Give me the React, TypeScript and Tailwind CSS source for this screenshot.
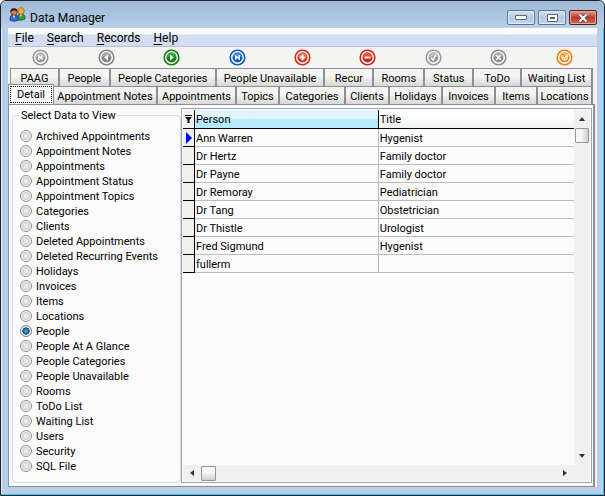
import { useState, type ReactNode } from "react";

const views = [
  "Archived Appointments",
  "Appointment Notes",
  "Appointments",
  "Appointment Status",
  "Appointment Topics",
  "Categories",
  "Clients",
  "Deleted Appointments",
  "Deleted Recurring Events",
  "Holidays",
  "Invoices",
  "Items",
  "Locations",
  "People",
  "People At A Glance",
  "People Categories",
  "People Unavailable",
  "Rooms",
  "ToDo List",
  "Waiting List",
  "Users",
  "Security",
  "SQL File",
];

const people = [
  ["Ann Warren", "Hygenist"],
  ["Dr Hertz", "Family doctor"],
  ["Dr Payne", "Family doctor"],
  ["Dr Remoray", "Pediatrician"],
  ["Dr Tang", "Obstetrician"],
  ["Dr Thistle", "Urologist"],
  ["Fred Sigmund", "Hygenist"],
  ["fullerm", ""],
];

const backTabs = [
  "PAAG",
  "People",
  "People Categories",
  "People Unavailable",
  "Recur",
  "Rooms",
  "Status",
  "ToDo",
  "Waiting List",
];

const frontTabs = [
  "Appointment Notes",
  "Appointments",
  "Topics",
  "Categories",
  "Clients",
  "Holidays",
  "Invoices",
  "Items",
  "Locations",
];

const menus = ["File", "Search", "Records", "Help"];

function PeopleLogo() {
  return (
    <svg width="17" height="15" viewBox="0 0 17 15" aria-hidden="true">
      <path d="M8.5 13V9.5Q8.5 7 12 7T16 9.5V12Q13 14 8.5 13Z" fill="#3f9a35" stroke="#1d4d1c" strokeWidth=".7" />
      <path d="M11 7h2l-1 3z" fill="#fff" />
      <circle cx="12" cy="4" r="3.2" fill="#f6b04a" stroke="#8c5310" strokeWidth=".8" />
      <path d="M9 3.5Q9.3 .8 12 .8T15.2 3.5Q12 1.8 9 3.5Z" fill="#e09a1c" />
      <path d="M1 13.5V10.5Q1 8 5 8T9 10.5V13.5Q5 15 1 13.5Z" fill="#3468d8" stroke="#16306f" strokeWidth=".7" />
      <path d="M4 8h2l-1 4z" fill="#fff" />
      <circle cx="5" cy="5" r="3.2" fill="#d98250" stroke="#5a2b14" strokeWidth=".8" />
      <path d="M1.5 5Q1.3 1.3 5 1.3T8.5 5Q6.5 3 4.5 3.8T1.5 5Z" fill="#3a2018" />
    </svg>
  );
}

function Orb({ color, light, children }: { color: string; light: string; children: ReactNode }) {
  return (
    <svg width="17" height="17" viewBox="0 0 17 17" aria-hidden="true">
      <circle cx="8.5" cy="8.5" r="7.3" fill="#fff" stroke={color} strokeWidth="1.6" />
      <circle cx="8.5" cy="8.5" r="5" fill={color} />
      <path d="M3.8 8Q4.3 3.7 8.5 3.5T13.2 8Q8.5 6.5 3.8 8Z" fill={light} />
      {children}
    </svg>
  );
}

const tools = [
  { name: "First", color: "#989898", light: "#b8b8b8", art: <path d="M6 6h1.5v2L10.5 6v5L7.5 9v2H6z" fill="#fff" /> },
  { name: "Previous", color: "#858585", light: "#a5a5a5", art: <path d="M10 5.5v6L6 8.5z" fill="#fff" /> },
  { name: "Next", color: "#0b7d14", light: "#3ca53f", art: <path d="M7 5.5v6l4-3z" fill="#fff" /> },
  { name: "Last", color: "#1158bd", light: "#3c8ae0", art: <path d="M6 6L9.5 8V6H11v5H9.5V9L6 11z" fill="#fff" /> },
  { name: "Insert", color: "#cf2a1c", light: "#ee6250", art: <path d="M7.5 5.5h2v2h2v2h-2v2h-2v-2h-2v-2h2z" fill="#fff" /> },
  { name: "Delete", color: "#c9261a", light: "#e65544", art: <path d="M5.5 7.5h6v2h-6z" fill="#fff" /> },
  { name: "Post", color: "#9a9a9a", light: "#bbbbbb", art: <path d="M6 8.5l2 2.5 3-5.5" fill="none" stroke="#fff" strokeWidth="1.5" /> },
  { name: "Cancel", color: "#8e8e8e", light: "#adadad", art: <path d="M6.3 6.3l4.4 4.4M10.7 6.3l-4.4 4.4" stroke="#fff" strokeWidth="1.5" /> },
  { name: "Refresh", color: "#ec7f14", light: "#f7aa4b", art: <path d="M6 7Q5.3 11 8.5 11T11.3 7M7 8l1.5 1.5L11.5 5.5" fill="none" stroke="#fff" strokeWidth="1.2" /> },
];

function Arrow({ d }: { d: string }) {
  return (
    <svg width="8" height="8" viewBox="0 0 8 8" aria-hidden="true">
      <path d={d} fill="#333" />
    </svg>
  );
}

function Tab({ label }: { label: string }) {
  return (
    <button
      role="tab"
      aria-selected="false"
      className="h-full min-w-0 overflow-hidden whitespace-nowrap border-r-2 border-t border-r-[#8c8f98] border-t-[#8c8f98] bg-linear-to-b from-[#f4f4f3] from-45% to-[#d6d8d5] pt-0.5 text-center"
    >
      {label}
    </button>
  );
}

const captionButton =
  "flex h-[15px] items-center justify-center rounded-[2px] border border-[#62748c] bg-linear-to-b from-[#d3e2f3] via-[#b3cae4] via-50% to-[#c3d8ee] shadow-[inset_0_0_0_1px_#dfeaf6]";

export default function App() {
  const [view, setView] = useState("People");

  return (
    <div className="flex min-h-screen flex-col rounded-t-md border border-[#20242c] bg-[#b9d0ea] font-['Roboto','Noto_Sans',sans-serif] text-[11px] leading-[15px] text-black shadow-[inset_-1px_-1px_0_#35c8e6,inset_1px_1px_0_#e4eef8]">
      <header className="flex h-[27px] items-center gap-1 rounded-t-md bg-linear-to-b from-[#9db9d6] to-[#bad0e9] pl-2 pr-[7px]">
        <PeopleLogo />
        <h1 className="flex-1 pt-2 text-[12px]">Data Manager</h1>
        <div className="flex gap-[3px] pt-[6px]">
          <button aria-label="Minimize" className={`${captionButton} w-7`}>
            <span className="h-[5px] w-3 rounded-[1px] border border-[#5b6675] bg-white" />
          </button>
          <button aria-label="Maximize" className={`${captionButton} w-7`}>
            <span className="h-2 w-[11px] rounded-[1px] border border-[#5b6675] bg-white p-[2px]">
              <span className="block h-full border border-[#5b6675] bg-[#9fb8d4]" />
            </span>
          </button>
          <button
            aria-label="Close"
            className="flex h-[15px] w-7 items-center justify-center rounded-[2px] border border-[#5a1d1a] bg-linear-to-b from-[#e0a094] via-[#b93a26] via-50% to-[#cf6a50] shadow-[inset_0_0_0_1px_#e3a79c]"
          >
            <svg width="12" height="10" viewBox="0 0 12 10" aria-hidden="true">
              <path d="M2.5 1.5l7 7M9.5 1.5l-7 7" stroke="#5b3a40" strokeWidth="3.6" />
              <path d="M2.5 1.5l7 7M9.5 1.5l-7 7" stroke="#fff" strokeWidth="2.2" />
            </svg>
          </button>
        </div>
      </header>

      <main className="mx-[7px] mb-2 flex flex-1 flex-col bg-[#f3f3f3]">
        <nav className="flex h-[19px] items-center gap-[13px] border-b border-[#b5c0d6] bg-linear-to-b from-[#fbfcfe] from-30% to-[#d5def1] to-40% pl-[7px] pt-0.5 text-[12px]">
          {menus.map((m) => (
            <button key={m}>
              <span className="underline underline-offset-2">{m[0]}</span>
              {m.slice(1)}
            </button>
          ))}
        </nav>

        <div role="toolbar" aria-label="Record navigation" className="grid h-[21px] grid-cols-9 place-items-center bg-[#f4f4f3]">
          {tools.map((t) => (
            <button key={t.name} aria-label={t.name}>
              <Orb color={t.color} light={t.light}>
                {t.art}
              </Orb>
            </button>
          ))}
        </div>

        <div role="tablist" aria-label="Data views" className="mr-1">
          <div className="ml-[2px] grid h-[18px] grid-cols-[49fr_51fr_106fr_109fr_49fr_51fr_49fr_48fr_71fr] border-l border-[#8c8f98]">
            {backTabs.map((t) => (
              <Tab key={t} label={t} />
            ))}
          </div>
          <div className="grid h-[18px] grid-cols-[46fr_104fr_79fr_43fr_66fr_44fr_53fr_53fr_42fr_55fr] items-end">
            <button
              role="tab"
              aria-selected="true"
              className="z-10 -mt-[2px] h-5 border border-b-0 border-[#8c8f98] bg-[#fcfcfd] p-px"
            >
              <span className="block h-[17px] border border-dotted border-black leading-[15px]">Detail</span>
            </button>
            {frontTabs.map((t) => (
              <Tab key={t} label={t} />
            ))}
          </div>
        </div>

        <div className="mr-[2px] flex flex-1 border border-r-2 border-[#8c8f98] bg-[#fbfbfc] p-[3px] pr-[1px]">
          <fieldset className="flex w-[169px] shrink-0 flex-col rounded-sm border border-[#ccdcec] pb-[6px] pl-[7px]">
            <legend className="px-px">Select Data to View</legend>
            <div className="pt-[5px]">
              {views.map((v) => (
                <label key={v} className="flex h-[15px] items-center gap-1 whitespace-nowrap">
                  <input
                    type="radio"
                    name="view"
                    checked={view === v}
                    onChange={() => setView(v)}
                    className="size-3 appearance-none rounded-full border border-[#8e8f8f] bg-radial from-[#e9ebec] from-20% via-[#cfd3d6] via-50% to-[#f8f8f8] to-65% checked:border-[#6f7f8f] checked:from-[#4fb0e4] checked:from-5% checked:via-[#12426b] checked:via-48% checked:to-[#f0f2f4] checked:to-55%"
                  />
                  <span className="pt-0.5">{v}</span>
                </label>
              ))}
            </div>
          </fieldset>

          <section className="flex min-w-0 flex-1 flex-col border border-[#a0a4ac] p-px">
            <div className="flex flex-1">
              <div className="min-w-0 flex-1">
                <table className="w-full table-fixed border-separate border-spacing-0 text-left">
                  <thead>
                    <tr className="h-[19px]">
                      <th aria-label="Filter" className="w-3 border-b border-r border-black bg-[#f0f0f0] p-0">
                        <svg width="10" height="10" viewBox="0 0 10 10" aria-hidden="true">
                          <path d="M2 1h7v1H2zM2 3h7L6.5 6v3h-2V6z" fill="#111" />
                        </svg>
                      </th>
                      <th className="w-[47%] border-b border-r border-black bg-linear-to-b from-[#dff4fd] from-45% to-[#b5e9fb] to-55% p-0 pl-px font-normal">
                        Person
                      </th>
                      <th className="border-b border-black bg-linear-to-b from-[#fdfdfe] from-40% to-[#eff1f4] p-0 pl-px font-normal">
                        Title
                      </th>
                    </tr>
                  </thead>
                  <tbody>
                    {people.map(([name, title], i) => (
                      <tr key={name} className="h-[18px]">
                        <td className="border-b border-r border-black bg-[#efefee] p-0">
                          {i === 0 && (
                            <svg width="10" height="12" viewBox="0 0 10 12" className="block" aria-hidden="true">
                              <path d="M3 0v12l6-6z" fill="#0505f0" />
                            </svg>
                          )}
                        </td>
                        <td className="border-b border-r border-[#bcbcbc] p-0 pl-px pt-0.5">{name}</td>
                        <td className="border-b border-[#bcbcbc] p-0 pl-px pt-0.5">{title}</td>
                      </tr>
                    ))}
                  </tbody>
                </table>
              </div>
              <div className="flex w-4 flex-col items-center bg-[#f0f0f0]">
                <button aria-label="Scroll up" className="flex h-[18px] items-center">
                  <Arrow d="M1 6l3-4 3 4z" />
                </button>
                <div className="h-[15px] w-[14px] rounded-[1px] border border-[#979797] bg-linear-to-r from-[#f6f6f6] from-45% to-[#cfcfcf]" />
                <div className="flex-1" />
                <button aria-label="Scroll down" className="flex h-[18px] items-center">
                  <Arrow d="M1 2l3 4 3-4z" />
                </button>
              </div>
            </div>
            <div className="flex h-4 items-center bg-[#f0f0f0] pr-4">
              <button aria-label="Scroll left" className="flex w-[18px] justify-center">
                <Arrow d="M6 1v6L2 4z" />
              </button>
              <div className="h-[15px] w-[15px] rounded-[1px] border border-[#979797] bg-linear-to-b from-[#f6f6f6] from-45% to-[#cfcfcf]" />
              <div className="flex-1" />
              <button aria-label="Scroll right" className="flex w-[18px] justify-center">
                <Arrow d="M2 1v6l4-3z" />
              </button>
            </div>
          </section>
        </div>
      </main>
    </div>
  );
}
